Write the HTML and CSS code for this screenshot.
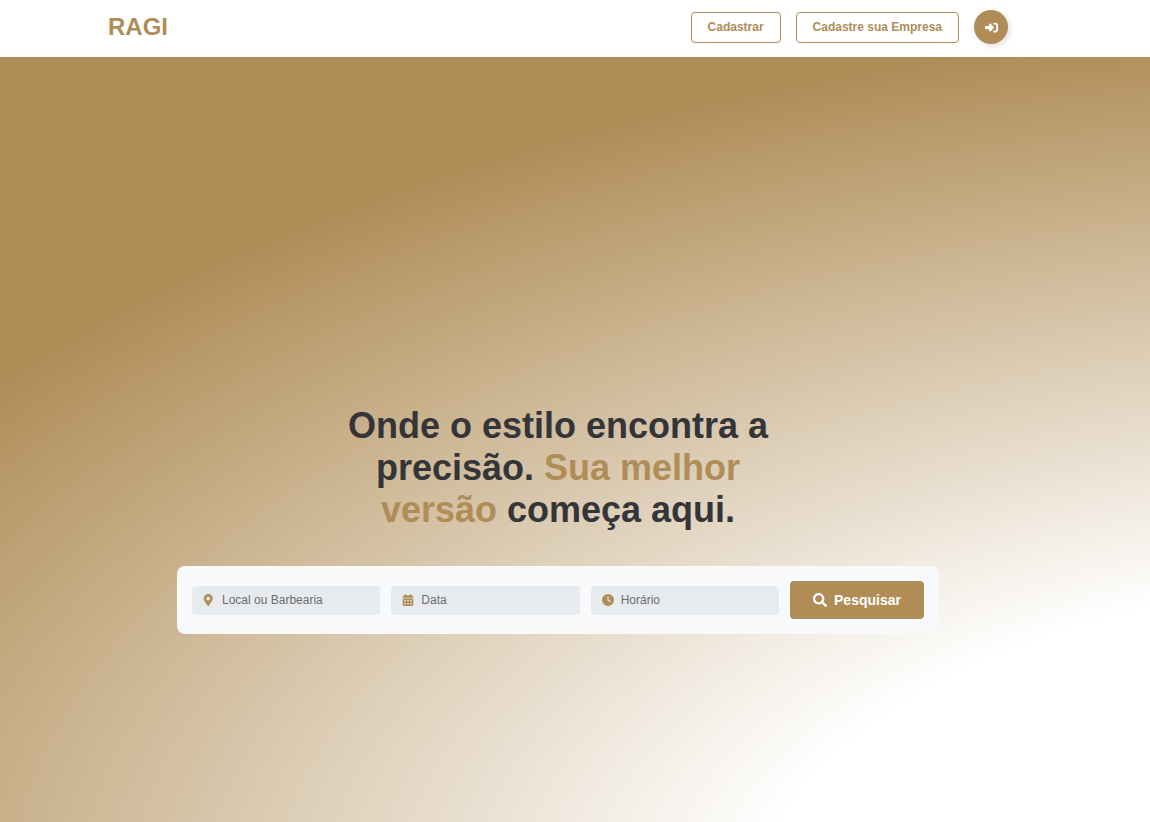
FILE: index.html
```html
<!DOCTYPE html>
<html lang="pt-BR">
<head>
<meta charset="utf-8">
<meta name="viewport" content="width=device-width, initial-scale=1">
<title>RAGI</title>
<link rel="stylesheet" href="styles.css">
</head>
<body>
<header class="topbar">
  <div class="topbar-inner">
    <a class="brand" href="#">RAGI</a>
    <nav class="actions">
      <a class="btn-outline" href="#">Cadastrar</a>
      <a class="btn-outline" href="#">Cadastre sua Empresa</a>
      <a class="btn-login" href="#" aria-label="Entrar">
        <svg viewBox="0 0 512 512" aria-hidden="true"><path d="M217.900 105.900L340.700 228.700c7.200 7.200 11.300 17.100 11.300 27.300s-4.100 20.100-11.300 27.300L217.900 406.100c-6.400 6.400-15 9.900-24 9.900c-18.700 0-33.900-15.200-33.900-33.900V320H32c-17.700 0-32-14.300-32-32v-64c0-17.700 14.300-32 32-32h128v-62.100c0-18.700 15.200-33.900 33.900-33.900c9 0 17.600 3.600 24 9.900zM352 448h64c53 0 96-43 96-96V160c0-53-43-96-96-96h-64c-17.700 0-32 14.300-32 32s14.300 40 32 40h64c17.700 0 24 6.300 24 24v192c0 17.700-6.300 24-24 24h-64c-17.700 0-32 14.300-32 36s14.300 36 32 36z"/></svg>
      </a>
    </nav>
  </div>
</header>
<main class="hero">
  <h1 class="headline">Onde o estilo encontra a precisão. <span class="accent">Sua melhor versão</span> começa aqui.</h1>
  <form class="search">
    <label class="field">
      <svg class="icon" viewBox="-32 0 512 512" aria-hidden="true"><path fill-rule="evenodd" d="M215.700 499.200C267 435 384 279.400 384 192C384 86 298 0 192 0S0 86 0 192c0 87.400 117 243 168.300 307.200c12.300 15.300 35.100 15.300 47.400 0zM192 112a80 80 0 1 0 0 160 80 80 0 1 0 0-160z"/></svg>
      <input type="text" placeholder="Local ou Barbearia" aria-label="Local ou Barbearia">
    </label>
    <label class="field">
      <svg class="icon" viewBox="-32 0 512 512" aria-hidden="true"><path fill-rule="evenodd" d="M128 0c17.700 0 32 14.300 32 32v32h128V32c0-17.700 14.300-32 32-32s32 14.300 32 32v32h48c26.500 0 48 21.500 48 48v48H0v-48c0-26.500 21.500-48 48-48h48V32c0-17.700 14.300-32 32-32zM0 192h448v272c0 26.500-21.500 48-48 48H48c-26.500 0-48-21.500-48-48V192zM64 256h64v64H64zM192 256h64v64h-64zM320 256h64v64h-64zM64 384h64v64H64zM192 384h64v64h-64zM320 384h64v64h-64z"/></svg>
      <input type="text" placeholder="Data" aria-label="Data">
    </label>
    <label class="field">
      <svg class="icon" viewBox="0 0 512 512" aria-hidden="true"><path fill-rule="evenodd" d="M256 0a256 256 0 1 1 0 512A256 256 0 1 1 256 0zM232 120v136c0 8 4 15.500 10.700 20l96 64c11 7.400 25.900 4.400 33.300-6.700s4.400-25.900-6.700-33.300L280 243.200V120c0-13.300-10.700-24-24-24s-24 10.700-24 24z"/></svg>
      <input type="text" placeholder="Horário" aria-label="Horário">
    </label>
    <button class="btn-search" type="button">
      <svg viewBox="0 0 512 512" aria-hidden="true"><path d="M505 442.700L405.300 343c-4.500-4.500-10.600-7-17-7H372c27.600-35.300 44-79.700 44-128C416 93.100 322.900 0 208 0S0 93.100 0 208s93.100 208 208 208c48.300 0 92.700-16.400 128-44v16.300c0 6.400 2.500 12.500 7 17l99.700 99.700c9.400 9.400 24.600 9.400 33.900 0l28.300-28.300c9.400-9.400 9.400-24.600.1-34zM208 336c-70.700 0-128-57.200-128-128 0-70.700 57.200-128 128-128 70.700 0 128 57.200 128 128 0 70.700-57.200 128-128 128z"/></svg>
      Pesquisar
    </button>
  </form>
</main>
</body>
</html>
```
FILE: styles.css
```css
:root {
  --gold: #b08d57;
  --ink: #343538;
  --gutter: 34px;
}

* {
  box-sizing: border-box;
}

body {
  margin: 0;
  min-height: 100vh;
  display: flex;
  flex-direction: column;
  font-family: "Liberation Sans", Arial, sans-serif;
  background: #fff;
}

.topbar {
  padding: 10px var(--gutter) 13px 0;
  background: #fff;
}

.topbar-inner {
  display: flex;
  align-items: center;
  justify-content: space-between;
  max-width: 900px;
  margin: 0 auto;
}

.brand {
  color: var(--gold);
  font-size: 24px;
  font-weight: 700;
  text-decoration: none;
}

.actions {
  display: flex;
  align-items: center;
  gap: 15px;
}

.btn-outline {
  padding: 7px 16px;
  border: 1px solid var(--gold);
  border-radius: 4px;
  color: var(--gold);
  font-size: 12px;
  font-weight: 700;
  line-height: 15px;
  text-decoration: none;
}

.btn-login {
  display: flex;
  align-items: center;
  justify-content: center;
  width: 34px;
  height: 34px;
  border-radius: 50%;
  background: var(--gold);
  box-shadow: 2px 2px 6px rgba(0, 0, 0, 0.12);
}

.btn-login svg {
  width: 13px;
  height: 13px;
  fill: #fff;
}

.hero {
  flex: 1;
  display: flex;
  flex-direction: column;
  align-items: center;
  justify-content: flex-end;
  gap: 35px;
  padding: 40px var(--gutter) 188px 0;
  background: radial-gradient(156% 116% at 125% 112%, #fff 38%, #b08d57 100%);
}

.headline {
  max-width: 450px;
  margin: 0;
  color: var(--ink);
  font-size: 36px;
  font-weight: 700;
  line-height: 42px;
  text-align: center;
}

.accent {
  color: var(--gold);
}

.search {
  display: flex;
  align-items: center;
  gap: 11px;
  width: 100%;
  max-width: 762px;
  padding: 15px;
  border-radius: 8px;
  background: #f8f9fb;
}

.field {
  flex: 1;
  display: flex;
  align-items: center;
  gap: 7px;
  min-width: 0;
  height: 29px;
  padding: 0 11px;
  border-radius: 4px;
  background: #e8ebed;
}

.icon {
  flex: none;
  width: 12px;
  height: 12px;
  fill: var(--gold);
}

.field input {
  flex: 1;
  min-width: 0;
  padding: 0;
  border: 0;
  outline: 0;
  background: transparent;
  font: 12px "Liberation Sans", Arial, sans-serif;
}

.field input::placeholder {
  color: #6c6c6e;
}

.btn-search {
  display: flex;
  align-items: center;
  justify-content: center;
  gap: 7px;
  width: 134px;
  height: 38px;
  padding: 0;
  border: 0;
  border-radius: 4px;
  background: var(--gold);
  color: #fff;
  font: 700 14px "Liberation Sans", Arial, sans-serif;
}

.btn-search svg {
  width: 14px;
  height: 14px;
  fill: #fff;
}
```
